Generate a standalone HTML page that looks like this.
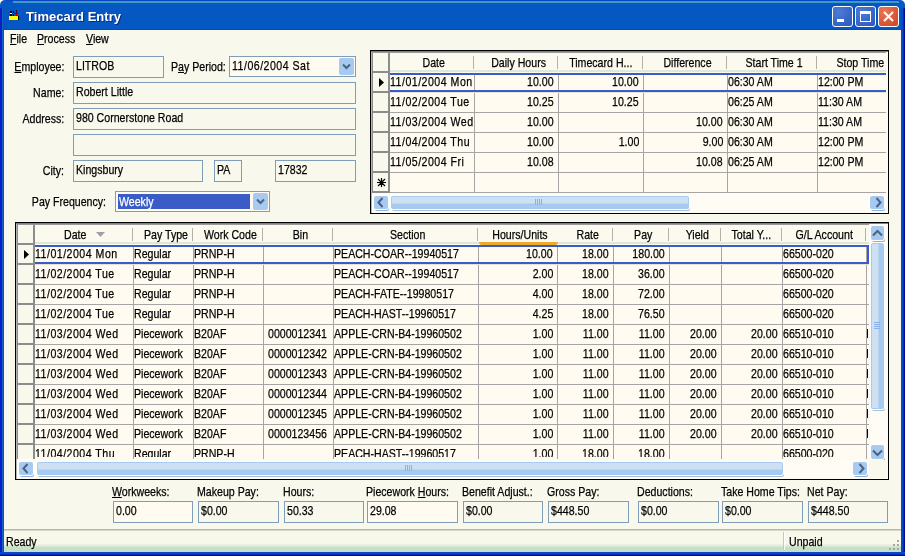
<!DOCTYPE html>
<html><head><meta charset="utf-8"><title>Timecard Entry</title>
<style>
html,body{margin:0;padding:0;}
body{width:906px;height:557px;overflow:hidden;background:#fff;position:relative;
 font-family:"Liberation Sans",sans-serif;font-size:13px;color:#000;line-height:15px;}
div,span{box-sizing:border-box;}
.a{position:absolute;white-space:nowrap;}
.t{display:inline-block;white-space:nowrap;transform:scaleX(0.815);-webkit-text-stroke:0.25px;}
.tl{transform-origin:0 50%;}
.tr{transform-origin:100% 50%;}
.tc{transform-origin:50% 50%;}
.d{letter-spacing:0.6px;}
.lbl{position:absolute;white-space:nowrap;height:15px;}
.r{text-align:right;}
.fld{position:absolute;border:1px solid #7F9DB9;height:22px;padding:1px 0 0 2px;white-space:nowrap;overflow:hidden;}
.w{background:#FFFBF0;}
u{text-decoration:underline;}
.grid{position:absolute;background:#FFFBF0;overflow:hidden;}
.hl{position:absolute;height:1px;background:#A5A5A5;}
.vl{position:absolute;width:1px;background:#A5A5A5;}
.c{position:absolute;height:15px;white-space:nowrap;overflow:hidden;}
.hd{position:absolute;height:15px;white-space:nowrap;text-align:center;}
.hs{position:absolute;width:1px;height:13px;background:#B4B2A8;}
.rh{position:absolute;background:#F9F8EC;border-right:2px solid #8C8C8C;border-bottom:2px solid #8C8C8C;border-left:1px solid #8C8C8C;}
.sb{position:absolute;background:#A6CAF0;border-radius:2px;box-shadow:0 0 0 1px #fff,1px 2px 0 0 #8DADE0;}
.th{position:absolute;background:#A6CAF0;border-radius:2px;box-shadow:0 0 0 1px #fff,1px 2px 0 0 #A3C0DC;}
</style></head><body><div id="win" style="position:absolute;left:0;top:0;width:906px;height:557px;will-change:transform;">

<div class="a" style="left:0;top:0;width:905px;height:556px;background:#F9F8EC;border-radius:5px 5px 0 0;"></div>
<div class="a" style="left:0;top:0;width:905px;height:30px;background:#0558C2;border-radius:5px 5px 0 0;"></div>
<div class="a" style="left:6px;top:0;width:893px;height:1px;background:#0A46C8;"></div>
<div class="a" style="left:13px;top:1px;width:886px;height:2px;background:#3C9CBE;"></div>
<div class="a" style="left:4px;top:29px;width:897px;height:1px;background:#0848C8;"></div>
<div class="a" style="left:0;top:8px;width:2px;height:548px;background:#0A1EC8;"></div>
<div class="a" style="left:2px;top:8px;width:1px;height:548px;background:#1464C8;"></div>
<div class="a" style="left:3px;top:8px;width:1px;height:548px;background:#0850C8;"></div>
<div class="a" style="left:901px;top:8px;width:2px;height:548px;background:#0848C8;"></div>
<div class="a" style="left:903px;top:8px;width:1px;height:548px;background:#0A28C0;"></div>
<div class="a" style="left:904px;top:8px;width:1px;height:548px;background:#001090;"></div>
<div class="a" style="left:0;top:552px;width:905px;height:2px;background:#0848C8;"></div>
<div class="a" style="left:0;top:554px;width:905px;height:1px;background:#0A28C0;"></div>
<div class="a" style="left:0;top:555px;width:905px;height:1px;background:#001090;"></div>
<div class="a" style="left:9px;top:16px;width:9px;height:4px;background:#FFFF00;"></div>
<div class="a" style="left:18px;top:16px;width:1px;height:4px;background:#000;"></div>
<div class="a" style="left:10px;top:11px;width:2px;height:5px;background:#000;"></div>
<div class="a" style="left:13px;top:11px;width:1px;height:5px;background:#000;"></div>
<div class="a" style="left:16px;top:10px;width:1px;height:6px;background:#201040;"></div>
<div class="a" style="left:12px;top:13px;width:6px;height:1px;background:#102060;"></div>
<div class="a" style="left:10px;top:13px;width:2px;height:1px;background:#fff;"></div>
<div class="a" style="left:13px;top:13px;width:1px;height:1px;background:#F0F;"></div>
<div class="a" style="left:16px;top:14px;width:1px;height:1px;background:#F00;"></div>
<div class="a" style="left:26px;top:9px;font-size:13px;font-weight:bold;color:#fff;line-height:16px;letter-spacing:0.05px;text-shadow:1px 1px 0 #0A2A80;">Timecard Entry</div>
<div class="a" style="left:832px;top:6px;width:21px;height:21px;border:1px solid #fff;border-radius:3px;background:radial-gradient(circle at 30% 25%,#4C7CD6,#2A57BE);"><div class="a" style="left:4px;top:12px;width:7px;height:3px;background:#fff;"></div></div>
<div class="a" style="left:855px;top:6px;width:21px;height:21px;border:1px solid #fff;border-radius:3px;background:radial-gradient(circle at 30% 25%,#4C7CD6,#2A57BE);"><div class="a" style="left:4px;top:4px;width:11px;height:11px;border:1px solid #fff;border-top:3px solid #fff;"></div></div>
<div class="a" style="left:878px;top:6px;width:21px;height:21px;border:1px solid #fff;border-radius:3px;background:radial-gradient(circle at 30% 25%,#EC7656,#CC4424);"><svg class="a" style="left:4px;top:4px" width="11" height="11" viewBox="0 0 11 11"><path d="M1 1 L10 10 M10 1 L1 10" stroke="#fff" stroke-width="2"/></svg></div>
<div class="lbl" style="left:10px;top:31px;"><span class="t tl"><u>F</u>ile</span></div>
<div class="lbl" style="left:37px;top:31px;"><span class="t tl"><u>P</u>rocess</span></div>
<div class="lbl" style="left:86px;top:31px;"><span class="t tl"><u>V</u>iew</span></div>
<div class="lbl r" style="left:-76px;width:140px;top:59px;"><span class="t tr"><u>E</u>mployee:</span></div>
<div class="fld" style="left:73px;top:56px;width:91px;height:22px;"><span class="t tl">LITROB</span></div>
<div class="lbl" style="left:171px;top:59px;"><span class="t tl">P<u>a</u>y Period:</span></div>
<div class="fld w" style="left:229px;top:56px;width:127px;height:21px;"><span class="t tl d">11/06/2004 Sat</span></div>
<div class="a" style="left:339px;top:58px;width:15px;height:17px;background:#A6CAF0;border-radius:2px;"></div>
<svg class="a" style="left:342px;top:63px" width="9" height="8" viewBox="0 0 9 8"><path d="M1 1.5 L4.5 5 L8 1.5" stroke="#4D6185" stroke-width="2" fill="none"/></svg>
<div class="lbl r" style="left:-76px;width:140px;top:85px;"><span class="t tr">Name:</span></div>
<div class="fld" style="left:73px;top:82px;width:283px;height:22px;"><span class="t tl">Robert Little</span></div>
<div class="lbl r" style="left:-76px;width:140px;top:111px;"><span class="t tr">Address:</span></div>
<div class="fld" style="left:73px;top:108px;width:283px;height:22px;"><span class="t tl">980 Cornerstone Road</span></div>
<div class="fld" style="left:73px;top:134px;width:283px;height:22px;"></div>
<div class="lbl r" style="left:-76px;width:140px;top:163px;"><span class="t tr">City:</span></div>
<div class="fld" style="left:73px;top:160px;width:130px;height:22px;"><span class="t tl">Kingsbury</span></div>
<div class="fld" style="left:214px;top:160px;width:28px;height:22px;"><span class="t tl">PA</span></div>
<div class="fld" style="left:275px;top:160px;width:81px;height:22px;"><span class="t tl">17832</span></div>
<div class="lbl r" style="left:-34px;width:140px;top:194px;"><span class="t tr">Pay Frequency:</span></div>
<div class="fld w" style="left:115px;top:191px;width:155px;height:21px;padding:0;"></div>
<div class="a" style="left:118px;top:194px;width:132px;height:15px;background:#3A5CC6;color:#fff;padding:0 0 0 1px;"><span class="t tl">Weekly</span></div>
<div class="a" style="left:253px;top:193px;width:15px;height:17px;background:#A6CAF0;border-radius:2px;"></div>
<svg class="a" style="left:256px;top:198px" width="9" height="8" viewBox="0 0 9 8"><path d="M1 1.5 L4.5 5 L8 1.5" stroke="#4D6185" stroke-width="2" fill="none"/></svg>
<div class="a" style="left:370px;top:50px;width:519px;height:164px;background:#FFFBF0;border:1px solid #000;"></div>
<div class="a" style="left:371px;top:51px;width:517px;height:1px;background:#808080;"></div>
<div class="a" style="left:371px;top:52px;width:1px;height:161px;background:#B4B4B4;"></div>
<div class="grid" style="left:372px;top:52px;width:514px;height:141px;">
<div class="a" style="left:0;top:0;width:514px;height:21px;background:#FCFAEF;border-top:1px solid #9A9A9A;"></div>
<div class="a" style="left:18px;top:18px;width:497px;height:2px;background:#DDE8D6;"></div>
<div class="a" style="left:0;top:0;width:18px;height:141px;background:#F9F8EC;"></div>
<div class="hd" style="left:20px;top:3px;width:84px;"><span class="t tc">Date</span></div>
<div class="hs" style="left:101px;top:4px;"></div>
<div class="hd" style="left:105px;top:3px;width:83px;"><span class="t tc">Daily Hours</span></div>
<div class="hs" style="left:185px;top:4px;"></div>
<div class="hd" style="left:187px;top:3px;width:84px;"><span class="t tc">Timecard H...</span></div>
<div class="hs" style="left:270px;top:4px;"></div>
<div class="hd" style="left:274px;top:3px;width:83px;"><span class="t tc">Difference</span></div>
<div class="hs" style="left:354px;top:4px;"></div>
<div class="hd" style="left:358px;top:3px;width:89px;"><span class="t tc">Start Time 1</span></div>
<div class="hs" style="left:444px;top:4px;"></div>
<div class="hd" style="left:448px;top:3px;width:80px;"><span class="t tc">Stop Time</span></div>
<div class="rh" style="left:0;top:21px;width:18px;height:20px;"></div>
<div class="hl" style="left:18px;top:40px;width:496px;"></div>
<div class="rh" style="left:0;top:41px;width:18px;height:20px;"></div>
<div class="hl" style="left:18px;top:60px;width:496px;"></div>
<div class="rh" style="left:0;top:61px;width:18px;height:20px;"></div>
<div class="hl" style="left:18px;top:80px;width:496px;"></div>
<div class="rh" style="left:0;top:81px;width:18px;height:20px;"></div>
<div class="hl" style="left:18px;top:100px;width:496px;"></div>
<div class="rh" style="left:0;top:101px;width:18px;height:20px;"></div>
<div class="hl" style="left:18px;top:120px;width:496px;"></div>
<div class="rh" style="left:0;top:121px;width:18px;height:20px;"></div>
<div class="hl" style="left:18px;top:140px;width:496px;"></div>
<div class="rh" style="left:0;top:0;width:18px;height:21px;border-top:1px solid #9A9A9A;"></div>
<div class="vl" style="left:102px;top:21px;width:1px;height:120px;"></div>
<div class="vl" style="left:186px;top:21px;width:1px;height:120px;"></div>
<div class="vl" style="left:271px;top:21px;width:1px;height:120px;"></div>
<div class="vl" style="left:355px;top:21px;width:1px;height:120px;"></div>
<div class="vl" style="left:445px;top:21px;width:1px;height:120px;"></div>
<div class="c" style="left:18px;top:22px;width:84px;height:15px;"><span class="t tl d">11/01/2004 Mon</span></div>
<div class="c r" style="left:103px;top:22px;width:79px;height:15px;"><span class="t tr">10.00</span></div>
<div class="c r" style="left:187px;top:22px;width:80px;height:15px;"><span class="t tr">10.00</span></div>
<div class="c" style="left:356px;top:22px;width:89px;height:15px;"><span class="t tl">06:30 AM</span></div>
<div class="c" style="left:446px;top:22px;width:128px;height:15px;"><span class="t tl">12:00 PM</span></div>
<div class="c" style="left:18px;top:42px;width:84px;height:15px;"><span class="t tl d">11/02/2004 Tue</span></div>
<div class="c r" style="left:103px;top:42px;width:79px;height:15px;"><span class="t tr">10.25</span></div>
<div class="c r" style="left:187px;top:42px;width:80px;height:15px;"><span class="t tr">10.25</span></div>
<div class="c" style="left:356px;top:42px;width:89px;height:15px;"><span class="t tl">06:25 AM</span></div>
<div class="c" style="left:446px;top:42px;width:128px;height:15px;"><span class="t tl">11:30 AM</span></div>
<div class="c" style="left:18px;top:62px;width:84px;height:15px;"><span class="t tl d">11/03/2004 Wed</span></div>
<div class="c r" style="left:103px;top:62px;width:79px;height:15px;"><span class="t tr">10.00</span></div>
<div class="c r" style="left:272px;top:62px;width:79px;height:15px;"><span class="t tr">10.00</span></div>
<div class="c" style="left:356px;top:62px;width:89px;height:15px;"><span class="t tl">06:30 AM</span></div>
<div class="c" style="left:446px;top:62px;width:128px;height:15px;"><span class="t tl">11:30 AM</span></div>
<div class="c" style="left:18px;top:82px;width:84px;height:15px;"><span class="t tl d">11/04/2004 Thu</span></div>
<div class="c r" style="left:103px;top:82px;width:79px;height:15px;"><span class="t tr">10.00</span></div>
<div class="c r" style="left:187px;top:82px;width:80px;height:15px;"><span class="t tr">1.00</span></div>
<div class="c r" style="left:272px;top:82px;width:79px;height:15px;"><span class="t tr">9.00</span></div>
<div class="c" style="left:356px;top:82px;width:89px;height:15px;"><span class="t tl">06:30 AM</span></div>
<div class="c" style="left:446px;top:82px;width:128px;height:15px;"><span class="t tl">12:00 PM</span></div>
<div class="c" style="left:18px;top:102px;width:84px;height:15px;"><span class="t tl d">11/05/2004 Fri</span></div>
<div class="c r" style="left:103px;top:102px;width:79px;height:15px;"><span class="t tr">10.08</span></div>
<div class="c r" style="left:272px;top:102px;width:79px;height:15px;"><span class="t tr">10.08</span></div>
<div class="c" style="left:356px;top:102px;width:89px;height:15px;"><span class="t tl">06:25 AM</span></div>
<div class="c" style="left:446px;top:102px;width:128px;height:15px;"><span class="t tl">12:00 PM</span></div>
<div class="a" style="left:18px;top:21px;width:496px;height:2px;background:#3A5CC6;"></div>
<div class="a" style="left:18px;top:38px;width:496px;height:2px;background:#3A5CC6;"></div>
<div class="a" style="left:18px;top:40px;width:496px;height:1px;background:#E4E2DA;"></div>
<svg class="a" style="left:7px;top:26px" width="5" height="9" viewBox="0 0 5 9"><path d="M0 0 L5 4.5 L0 9 Z" fill="#000"/></svg>
<svg class="a" style="left:5px;top:126px" width="9" height="9" viewBox="0 0 9 9"><path d="M4.5 0 V9 M0 4.5 H9 M1 1 L8 8 M8 1 L1 8" stroke="#000" stroke-width="1.2"/><rect x="3" y="3" width="3" height="3" fill="#000"/></svg>
</div>
<div class="a" style="left:372px;top:194px;width:515px;height:17px;background:#FEFCF4;"></div>
<div class="sb" style="left:374px;top:196px;width:14px;height:13px;"></div>
<svg class="a" style="left:377px;top:197px" width="7" height="11" viewBox="0 0 7 11"><path d="M5.5 1 L1.5 5.5 L5.5 10" stroke="#4D6185" stroke-width="2" fill="none"/></svg>
<div class="sb" style="left:870px;top:196px;width:14px;height:13px;"></div>
<svg class="a" style="left:875px;top:197px" width="7" height="11" viewBox="0 0 7 11"><path d="M1.5 1 L5.5 5.5 L1.5 10" stroke="#4D6185" stroke-width="2" fill="none"/></svg>
<div class="th" style="left:391px;top:196px;width:298px;height:13px;"></div>
<div class="a" style="left:392px;top:197px;width:296px;height:6px;background:#CEE1F2;"></div>
<div class="a" style="left:392px;top:203px;width:296px;height:1px;background:#BCD6F1;"></div>
<div class="a" style="left:535px;top:199px;width:1px;height:6px;background:#8CB0E8;"></div>
<div class="a" style="left:537px;top:199px;width:1px;height:6px;background:#8CB0E8;"></div>
<div class="a" style="left:539px;top:199px;width:1px;height:6px;background:#8CB0E8;"></div>
<div class="a" style="left:541px;top:199px;width:1px;height:6px;background:#8CB0E8;"></div>
<div class="a" style="left:15px;top:222px;width:874px;height:258px;background:#FFFBF0;border:1px solid #000;"></div>
<div class="a" style="left:16px;top:223px;width:872px;height:1px;background:#808080;"></div>
<div class="a" style="left:16px;top:224px;width:1px;height:255px;background:#B4B4B4;"></div>
<div class="grid" style="left:17px;top:224px;width:852px;height:235px;">
<div class="a" style="left:0;top:0;width:852px;height:21px;background:#FCFAEF;border-top:1px solid #9A9A9A;"></div>
<div class="a" style="left:18px;top:18px;width:835px;height:2px;background:#DDE8D6;"></div>
<div class="a" style="left:0;top:0;width:18px;height:235px;background:#F9F8EC;"></div>
<div class="hd" style="left:47px;top:3px;width:40px;text-align:left;"><span class="t tl">Date</span></div>
<div class="hs" style="left:115px;top:4px;"></div>
<div class="hd" style="left:119px;top:3px;width:59px;"><span class="t tc">Pay Type</span></div>
<div class="hs" style="left:175px;top:4px;"></div>
<div class="hd" style="left:179px;top:3px;width:69px;"><span class="t tc">Work Code</span></div>
<div class="hs" style="left:245px;top:4px;"></div>
<div class="hd" style="left:249px;top:3px;width:69px;"><span class="t tc">Bin</span></div>
<div class="hs" style="left:315px;top:4px;"></div>
<div class="hd" style="left:319px;top:3px;width:144px;"><span class="t tc">Section</span></div>
<div class="hs" style="left:460px;top:4px;"></div>
<div class="hd" style="left:464px;top:3px;width:78px;"><span class="t tc">Hours/Units</span></div>
<div class="hd" style="left:543px;top:3px;width:55px;"><span class="t tc">Rate</span></div>
<div class="hs" style="left:595px;top:4px;"></div>
<div class="hd" style="left:599px;top:3px;width:55px;"><span class="t tc">Pay</span></div>
<div class="hs" style="left:651px;top:4px;"></div>
<div class="hd" style="left:655px;top:3px;width:51px;"><span class="t tc">Yield</span></div>
<div class="hs" style="left:703px;top:4px;"></div>
<div class="hd" style="left:704px;top:3px;width:60px;"><span class="t tc">Total Y...</span></div>
<div class="hs" style="left:764px;top:4px;"></div>
<div class="hd" style="left:766px;top:3px;width:83px;"><span class="t tc">G/L Account</span></div>
<div class="hs" style="left:848px;top:4px;"></div>
<div class="a" style="left:462px;top:18px;width:79px;height:3px;background:#F0A828;border-radius:0 0 4px 4px;"></div>
<svg class="a" style="left:79px;top:8px" width="9" height="5" viewBox="0 0 9 5"><path d="M0 0 L9 0 L4.5 5 Z" fill="#A0A0A4"/></svg>
<div class="rh" style="left:0;top:21px;width:18px;height:20px;"></div>
<div class="hl" style="left:18px;top:40px;width:834px;"></div>
<div class="rh" style="left:0;top:41px;width:18px;height:20px;"></div>
<div class="hl" style="left:18px;top:60px;width:834px;"></div>
<div class="rh" style="left:0;top:61px;width:18px;height:20px;"></div>
<div class="hl" style="left:18px;top:80px;width:834px;"></div>
<div class="rh" style="left:0;top:81px;width:18px;height:20px;"></div>
<div class="hl" style="left:18px;top:100px;width:834px;"></div>
<div class="rh" style="left:0;top:101px;width:18px;height:20px;"></div>
<div class="hl" style="left:18px;top:120px;width:834px;"></div>
<div class="rh" style="left:0;top:121px;width:18px;height:20px;"></div>
<div class="hl" style="left:18px;top:140px;width:834px;"></div>
<div class="rh" style="left:0;top:141px;width:18px;height:20px;"></div>
<div class="hl" style="left:18px;top:160px;width:834px;"></div>
<div class="rh" style="left:0;top:161px;width:18px;height:20px;"></div>
<div class="hl" style="left:18px;top:180px;width:834px;"></div>
<div class="rh" style="left:0;top:181px;width:18px;height:20px;"></div>
<div class="hl" style="left:18px;top:200px;width:834px;"></div>
<div class="rh" style="left:0;top:201px;width:18px;height:20px;"></div>
<div class="hl" style="left:18px;top:220px;width:834px;"></div>
<div class="rh" style="left:0;top:221px;width:18px;height:20px;"></div>
<div class="hl" style="left:18px;top:240px;width:834px;"></div>
<div class="rh" style="left:0;top:0;width:18px;height:21px;border-top:1px solid #9A9A9A;"></div>
<div class="vl" style="left:116px;top:21px;width:1px;height:214px;"></div>
<div class="vl" style="left:176px;top:21px;width:1px;height:214px;"></div>
<div class="vl" style="left:246px;top:21px;width:1px;height:214px;"></div>
<div class="vl" style="left:316px;top:21px;width:1px;height:214px;"></div>
<div class="vl" style="left:461px;top:21px;width:1px;height:214px;"></div>
<div class="vl" style="left:540px;top:21px;width:1px;height:214px;"></div>
<div class="vl" style="left:596px;top:21px;width:1px;height:214px;"></div>
<div class="vl" style="left:652px;top:21px;width:1px;height:214px;"></div>
<div class="vl" style="left:704px;top:21px;width:1px;height:214px;"></div>
<div class="vl" style="left:765px;top:21px;width:1px;height:214px;"></div>
<div class="vl" style="left:849px;top:21px;width:1px;height:214px;"></div>
<div class="c" style="left:18px;top:22px;width:98px;height:15px;"><span class="t tl d">11/01/2004 Mon</span></div>
<div class="c" style="left:117px;top:22px;width:59px;height:15px;"><span class="t tl">Regular</span></div>
<div class="c" style="left:177px;top:22px;width:69px;height:15px;"><span class="t tl">PRNP-H</span></div>
<div class="c" style="left:317px;top:22px;width:144px;height:15px;"><span class="t tl">PEACH-COAR--19940517</span></div>
<div class="c r" style="left:462px;top:22px;width:74px;height:15px;"><span class="t tr">10.00</span></div>
<div class="c r" style="left:541px;top:22px;width:51px;height:15px;"><span class="t tr">18.00</span></div>
<div class="c r" style="left:597px;top:22px;width:51px;height:15px;"><span class="t tr">180.00</span></div>
<div class="c" style="left:766px;top:22px;width:83px;height:15px;"><span class="t tl">66500-020</span></div>
<div class="c" style="left:18px;top:42px;width:98px;height:15px;"><span class="t tl d">11/02/2004 Tue</span></div>
<div class="c" style="left:117px;top:42px;width:59px;height:15px;"><span class="t tl">Regular</span></div>
<div class="c" style="left:177px;top:42px;width:69px;height:15px;"><span class="t tl">PRNP-H</span></div>
<div class="c" style="left:317px;top:42px;width:144px;height:15px;"><span class="t tl">PEACH-COAR--19940517</span></div>
<div class="c r" style="left:462px;top:42px;width:74px;height:15px;"><span class="t tr">2.00</span></div>
<div class="c r" style="left:541px;top:42px;width:51px;height:15px;"><span class="t tr">18.00</span></div>
<div class="c r" style="left:597px;top:42px;width:51px;height:15px;"><span class="t tr">36.00</span></div>
<div class="c" style="left:766px;top:42px;width:83px;height:15px;"><span class="t tl">66500-020</span></div>
<div class="c" style="left:18px;top:62px;width:98px;height:15px;"><span class="t tl d">11/02/2004 Tue</span></div>
<div class="c" style="left:117px;top:62px;width:59px;height:15px;"><span class="t tl">Regular</span></div>
<div class="c" style="left:177px;top:62px;width:69px;height:15px;"><span class="t tl">PRNP-H</span></div>
<div class="c" style="left:317px;top:62px;width:144px;height:15px;"><span class="t tl">PEACH-FATE--19980517</span></div>
<div class="c r" style="left:462px;top:62px;width:74px;height:15px;"><span class="t tr">4.00</span></div>
<div class="c r" style="left:541px;top:62px;width:51px;height:15px;"><span class="t tr">18.00</span></div>
<div class="c r" style="left:597px;top:62px;width:51px;height:15px;"><span class="t tr">72.00</span></div>
<div class="c" style="left:766px;top:62px;width:83px;height:15px;"><span class="t tl">66500-020</span></div>
<div class="c" style="left:18px;top:82px;width:98px;height:15px;"><span class="t tl d">11/02/2004 Tue</span></div>
<div class="c" style="left:117px;top:82px;width:59px;height:15px;"><span class="t tl">Regular</span></div>
<div class="c" style="left:177px;top:82px;width:69px;height:15px;"><span class="t tl">PRNP-H</span></div>
<div class="c" style="left:317px;top:82px;width:144px;height:15px;"><span class="t tl">PEACH-HAST--19960517</span></div>
<div class="c r" style="left:462px;top:82px;width:74px;height:15px;"><span class="t tr">4.25</span></div>
<div class="c r" style="left:541px;top:82px;width:51px;height:15px;"><span class="t tr">18.00</span></div>
<div class="c r" style="left:597px;top:82px;width:51px;height:15px;"><span class="t tr">76.50</span></div>
<div class="c" style="left:766px;top:82px;width:83px;height:15px;"><span class="t tl">66500-020</span></div>
<div class="c" style="left:18px;top:102px;width:98px;height:15px;"><span class="t tl d">11/03/2004 Wed</span></div>
<div class="c" style="left:117px;top:102px;width:59px;height:15px;"><span class="t tl">Piecework</span></div>
<div class="c" style="left:177px;top:102px;width:69px;height:15px;"><span class="t tl">B20AF</span></div>
<div class="c" style="left:251px;top:102px;width:65px;height:15px;"><span class="t tl">0000012341</span></div>
<div class="c" style="left:317px;top:102px;width:144px;height:15px;"><span class="t tl">APPLE-CRN-B4-19960502</span></div>
<div class="c r" style="left:462px;top:102px;width:74px;height:15px;"><span class="t tr">1.00</span></div>
<div class="c r" style="left:541px;top:102px;width:51px;height:15px;"><span class="t tr">11.00</span></div>
<div class="c r" style="left:597px;top:102px;width:51px;height:15px;"><span class="t tr">11.00</span></div>
<div class="c r" style="left:653px;top:102px;width:47px;height:15px;"><span class="t tr">20.00</span></div>
<div class="c r" style="left:705px;top:102px;width:56px;height:15px;"><span class="t tr">20.00</span></div>
<div class="c" style="left:766px;top:102px;width:83px;height:15px;"><span class="t tl">66510-010</span></div>
<div class="c" style="left:18px;top:122px;width:98px;height:15px;"><span class="t tl d">11/03/2004 Wed</span></div>
<div class="c" style="left:117px;top:122px;width:59px;height:15px;"><span class="t tl">Piecework</span></div>
<div class="c" style="left:177px;top:122px;width:69px;height:15px;"><span class="t tl">B20AF</span></div>
<div class="c" style="left:251px;top:122px;width:65px;height:15px;"><span class="t tl">0000012342</span></div>
<div class="c" style="left:317px;top:122px;width:144px;height:15px;"><span class="t tl">APPLE-CRN-B4-19960502</span></div>
<div class="c r" style="left:462px;top:122px;width:74px;height:15px;"><span class="t tr">1.00</span></div>
<div class="c r" style="left:541px;top:122px;width:51px;height:15px;"><span class="t tr">11.00</span></div>
<div class="c r" style="left:597px;top:122px;width:51px;height:15px;"><span class="t tr">11.00</span></div>
<div class="c r" style="left:653px;top:122px;width:47px;height:15px;"><span class="t tr">20.00</span></div>
<div class="c r" style="left:705px;top:122px;width:56px;height:15px;"><span class="t tr">20.00</span></div>
<div class="c" style="left:766px;top:122px;width:83px;height:15px;"><span class="t tl">66510-010</span></div>
<div class="c" style="left:18px;top:142px;width:98px;height:15px;"><span class="t tl d">11/03/2004 Wed</span></div>
<div class="c" style="left:117px;top:142px;width:59px;height:15px;"><span class="t tl">Piecework</span></div>
<div class="c" style="left:177px;top:142px;width:69px;height:15px;"><span class="t tl">B20AF</span></div>
<div class="c" style="left:251px;top:142px;width:65px;height:15px;"><span class="t tl">0000012343</span></div>
<div class="c" style="left:317px;top:142px;width:144px;height:15px;"><span class="t tl">APPLE-CRN-B4-19960502</span></div>
<div class="c r" style="left:462px;top:142px;width:74px;height:15px;"><span class="t tr">1.00</span></div>
<div class="c r" style="left:541px;top:142px;width:51px;height:15px;"><span class="t tr">11.00</span></div>
<div class="c r" style="left:597px;top:142px;width:51px;height:15px;"><span class="t tr">11.00</span></div>
<div class="c r" style="left:653px;top:142px;width:47px;height:15px;"><span class="t tr">20.00</span></div>
<div class="c r" style="left:705px;top:142px;width:56px;height:15px;"><span class="t tr">20.00</span></div>
<div class="c" style="left:766px;top:142px;width:83px;height:15px;"><span class="t tl">66510-010</span></div>
<div class="c" style="left:18px;top:162px;width:98px;height:15px;"><span class="t tl d">11/03/2004 Wed</span></div>
<div class="c" style="left:117px;top:162px;width:59px;height:15px;"><span class="t tl">Piecework</span></div>
<div class="c" style="left:177px;top:162px;width:69px;height:15px;"><span class="t tl">B20AF</span></div>
<div class="c" style="left:251px;top:162px;width:65px;height:15px;"><span class="t tl">0000012344</span></div>
<div class="c" style="left:317px;top:162px;width:144px;height:15px;"><span class="t tl">APPLE-CRN-B4-19960502</span></div>
<div class="c r" style="left:462px;top:162px;width:74px;height:15px;"><span class="t tr">1.00</span></div>
<div class="c r" style="left:541px;top:162px;width:51px;height:15px;"><span class="t tr">11.00</span></div>
<div class="c r" style="left:597px;top:162px;width:51px;height:15px;"><span class="t tr">11.00</span></div>
<div class="c r" style="left:653px;top:162px;width:47px;height:15px;"><span class="t tr">20.00</span></div>
<div class="c r" style="left:705px;top:162px;width:56px;height:15px;"><span class="t tr">20.00</span></div>
<div class="c" style="left:766px;top:162px;width:83px;height:15px;"><span class="t tl">66510-010</span></div>
<div class="c" style="left:18px;top:182px;width:98px;height:15px;"><span class="t tl d">11/03/2004 Wed</span></div>
<div class="c" style="left:117px;top:182px;width:59px;height:15px;"><span class="t tl">Piecework</span></div>
<div class="c" style="left:177px;top:182px;width:69px;height:15px;"><span class="t tl">B20AF</span></div>
<div class="c" style="left:251px;top:182px;width:65px;height:15px;"><span class="t tl">0000012345</span></div>
<div class="c" style="left:317px;top:182px;width:144px;height:15px;"><span class="t tl">APPLE-CRN-B4-19960502</span></div>
<div class="c r" style="left:462px;top:182px;width:74px;height:15px;"><span class="t tr">1.00</span></div>
<div class="c r" style="left:541px;top:182px;width:51px;height:15px;"><span class="t tr">11.00</span></div>
<div class="c r" style="left:597px;top:182px;width:51px;height:15px;"><span class="t tr">11.00</span></div>
<div class="c r" style="left:653px;top:182px;width:47px;height:15px;"><span class="t tr">20.00</span></div>
<div class="c r" style="left:705px;top:182px;width:56px;height:15px;"><span class="t tr">20.00</span></div>
<div class="c" style="left:766px;top:182px;width:83px;height:15px;"><span class="t tl">66510-010</span></div>
<div class="c" style="left:18px;top:202px;width:98px;height:15px;"><span class="t tl d">11/03/2004 Wed</span></div>
<div class="c" style="left:117px;top:202px;width:59px;height:15px;"><span class="t tl">Piecework</span></div>
<div class="c" style="left:177px;top:202px;width:69px;height:15px;"><span class="t tl">B20AF</span></div>
<div class="c" style="left:251px;top:202px;width:65px;height:15px;"><span class="t tl">0000123456</span></div>
<div class="c" style="left:317px;top:202px;width:144px;height:15px;"><span class="t tl">APPLE-CRN-B4-19960502</span></div>
<div class="c r" style="left:462px;top:202px;width:74px;height:15px;"><span class="t tr">1.00</span></div>
<div class="c r" style="left:541px;top:202px;width:51px;height:15px;"><span class="t tr">11.00</span></div>
<div class="c r" style="left:597px;top:202px;width:51px;height:15px;"><span class="t tr">11.00</span></div>
<div class="c r" style="left:653px;top:202px;width:47px;height:15px;"><span class="t tr">20.00</span></div>
<div class="c r" style="left:705px;top:202px;width:56px;height:15px;"><span class="t tr">20.00</span></div>
<div class="c" style="left:766px;top:202px;width:83px;height:15px;"><span class="t tl">66510-010</span></div>
<div class="c" style="left:18px;top:222px;width:98px;height:11px;"><span class="t tl d">11/04/2004 Thu</span></div>
<div class="c" style="left:117px;top:222px;width:59px;height:11px;"><span class="t tl">Regular</span></div>
<div class="c" style="left:177px;top:222px;width:69px;height:11px;"><span class="t tl">PRNP-H</span></div>
<div class="c" style="left:317px;top:222px;width:144px;height:11px;"><span class="t tl">PEACH-HAST--19960517</span></div>
<div class="c r" style="left:462px;top:222px;width:74px;height:11px;"><span class="t tr">1.00</span></div>
<div class="c r" style="left:541px;top:222px;width:51px;height:11px;"><span class="t tr">18.00</span></div>
<div class="c r" style="left:597px;top:222px;width:51px;height:11px;"><span class="t tr">18.00</span></div>
<div class="c" style="left:766px;top:222px;width:83px;height:11px;"><span class="t tl">66500-020</span></div>
<div class="a" style="left:18px;top:21px;width:834px;height:2px;background:#3A5CC6;"></div>
<div class="a" style="left:18px;top:38px;width:834px;height:2px;background:#3A5CC6;"></div>
<div class="a" style="left:18px;top:40px;width:834px;height:1px;background:#E4E2DA;"></div>
<svg class="a" style="left:7px;top:26px" width="5" height="9" viewBox="0 0 5 9"><path d="M0 0 L5 4.5 L0 9 Z" fill="#000"/></svg>
</div>
<div class="a" style="left:867px;top:245px;width:2px;height:19px;background:#3A5CC6;"></div>
<div class="a" style="left:867px;top:329px;width:1px;height:9px;background:#000;"></div>
<div class="a" style="left:867px;top:349px;width:1px;height:9px;background:#000;"></div>
<div class="a" style="left:867px;top:369px;width:1px;height:9px;background:#000;"></div>
<div class="a" style="left:867px;top:389px;width:1px;height:9px;background:#000;"></div>
<div class="a" style="left:867px;top:409px;width:1px;height:9px;background:#000;"></div>
<div class="a" style="left:867px;top:429px;width:1px;height:9px;background:#000;"></div>
<div class="a" style="left:869px;top:224px;width:18px;height:236px;background:#FEFCF4;"></div>
<div class="sb" style="left:871px;top:226px;width:13px;height:14px;"></div>
<svg class="a" style="left:872px;top:229px" width="11" height="8" viewBox="0 0 11 8"><path d="M1 6.5 L5.5 2 L10 6.5" stroke="#4D6185" stroke-width="2" fill="none"/></svg>
<div class="sb" style="left:871px;top:445px;width:13px;height:14px;"></div>
<svg class="a" style="left:872px;top:449px" width="11" height="8" viewBox="0 0 11 8"><path d="M1 1.5 L5.5 6 L10 1.5" stroke="#4D6185" stroke-width="2" fill="none"/></svg>
<div class="th" style="left:871px;top:243px;width:13px;height:166px;"></div>
<div class="a" style="left:872px;top:244px;width:6px;height:164px;background:#CEE1F2;"></div>
<div class="a" style="left:878px;top:244px;width:1px;height:164px;background:#BCD6F1;"></div>
<div class="a" style="left:874px;top:322px;width:6px;height:1px;background:#8CB0E8;"></div>
<div class="a" style="left:874px;top:324px;width:6px;height:1px;background:#8CB0E8;"></div>
<div class="a" style="left:874px;top:326px;width:6px;height:1px;background:#8CB0E8;"></div>
<div class="a" style="left:874px;top:328px;width:6px;height:1px;background:#8CB0E8;"></div>
<div class="a" style="left:869px;top:460px;width:18px;height:18px;background:#F9F8EC;"></div>
<div class="a" style="left:17px;top:460px;width:852px;height:17px;background:#FEFCF4;"></div>
<div class="sb" style="left:19px;top:462px;width:14px;height:13px;"></div>
<svg class="a" style="left:22px;top:463px" width="7" height="11" viewBox="0 0 7 11"><path d="M5.5 1 L1.5 5.5 L5.5 10" stroke="#4D6185" stroke-width="2" fill="none"/></svg>
<div class="sb" style="left:853px;top:462px;width:14px;height:13px;"></div>
<svg class="a" style="left:858px;top:463px" width="7" height="11" viewBox="0 0 7 11"><path d="M1.5 1 L5.5 5.5 L1.5 10" stroke="#4D6185" stroke-width="2" fill="none"/></svg>
<div class="th" style="left:37px;top:462px;width:746px;height:13px;"></div>
<div class="a" style="left:38px;top:463px;width:744px;height:6px;background:#CEE1F2;"></div>
<div class="a" style="left:38px;top:469px;width:744px;height:1px;background:#BCD6F1;"></div>
<div class="a" style="left:405px;top:465px;width:1px;height:6px;background:#8CB0E8;"></div>
<div class="a" style="left:407px;top:465px;width:1px;height:6px;background:#8CB0E8;"></div>
<div class="a" style="left:409px;top:465px;width:1px;height:6px;background:#8CB0E8;"></div>
<div class="a" style="left:411px;top:465px;width:1px;height:6px;background:#8CB0E8;"></div>
<div class="lbl" style="left:112px;top:484px;"><span class="t tl"><u>W</u>orkweeks:</span></div>
<div class="fld w" style="left:113px;top:501px;width:80px;height:22px;"><span class="t tl">0.00</span></div>
<div class="lbl" style="left:197px;top:484px;"><span class="t tl">Makeup Pay:</span></div>
<div class="fld" style="left:198px;top:501px;width:81px;height:22px;"><span class="t tl">$0.00</span></div>
<div class="lbl" style="left:283px;top:484px;"><span class="t tl">Hours:</span></div>
<div class="fld" style="left:284px;top:501px;width:80px;height:22px;"><span class="t tl">50.33</span></div>
<div class="lbl" style="left:366px;top:484px;"><span class="t tl">Piecework <u>H</u>ours:</span></div>
<div class="fld w" style="left:367px;top:501px;width:91px;height:22px;"><span class="t tl">29.08</span></div>
<div class="lbl" style="left:462px;top:484px;"><span class="t tl">Benefit Adjust.:</span></div>
<div class="fld" style="left:463px;top:501px;width:80px;height:22px;"><span class="t tl">$0.00</span></div>
<div class="lbl" style="left:547px;top:484px;"><span class="t tl">Gross Pay:</span></div>
<div class="fld" style="left:548px;top:501px;width:81px;height:22px;"><span class="t tl">$448.50</span></div>
<div class="lbl" style="left:637px;top:484px;"><span class="t tl">Deductions:</span></div>
<div class="fld" style="left:638px;top:501px;width:81px;height:22px;"><span class="t tl">$0.00</span></div>
<div class="lbl" style="left:721px;top:484px;"><span class="t tl">Take Home Tips:</span></div>
<div class="fld" style="left:722px;top:501px;width:81px;height:22px;"><span class="t tl">$0.00</span></div>
<div class="lbl" style="left:807px;top:484px;"><span class="t tl">Net Pay:</span></div>
<div class="fld" style="left:808px;top:501px;width:80px;height:22px;"><span class="t tl">$448.50</span></div>
<div class="a" style="left:4px;top:529px;width:897px;height:1px;background:#BAB7A6;"></div>
<div class="a" style="left:4px;top:530px;width:897px;height:1px;background:#D8D8CA;"></div>
<div class="a" style="left:4px;top:531px;width:897px;height:13px;background:#F7F7EA;"></div>
<div class="a" style="left:4px;top:544px;width:897px;height:3px;background:linear-gradient(#F0F3E4,#D4E6D0);"></div>
<div class="a" style="left:4px;top:547px;width:897px;height:5px;background:#C6DFC6;"></div>
<div class="a" style="left:783px;top:532px;width:1px;height:18px;background:#C9C7BA;"></div>
<div class="a" style="left:784px;top:532px;width:1px;height:18px;background:#fff;"></div>
<div class="lbl" style="left:6px;top:534px;"><span class="t tl">Ready</span></div>
<div class="lbl" style="left:789px;top:534px;"><span class="t tl">Unpaid</span></div>
<div class="a" style="left:889px;top:548px;width:2px;height:2px;background:#A6A6AA;"></div>
<div class="a" style="left:893px;top:544px;width:2px;height:2px;background:#A6A6AA;"></div>
<div class="a" style="left:893px;top:548px;width:2px;height:2px;background:#A6A6AA;"></div>
<div class="a" style="left:897px;top:540px;width:2px;height:2px;background:#A6A6AA;"></div>
<div class="a" style="left:897px;top:544px;width:2px;height:2px;background:#A6A6AA;"></div>
<div class="a" style="left:897px;top:548px;width:2px;height:2px;background:#A6A6AA;"></div>
</div></body></html>
